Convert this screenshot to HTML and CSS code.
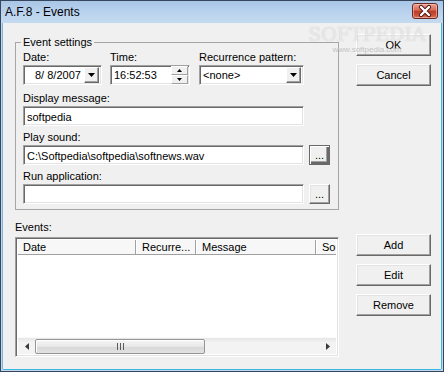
FILE: index.html
```html
<!DOCTYPE html>
<html lang="en">

<head>
    <meta charset="UTF-8">
    <meta name="viewport" content="width=device-width, initial-scale=1.0">
    <title>A.F.8 - Events</title>
    <link rel="stylesheet" href="styles.css">
</head>

<body>
    <div class="window">
        <div class="titlebar">
            <span class="title">A.F.8 - Events</span>
            <span class="close-btn">
                <svg width="26" height="16" viewBox="0 0 26 16">
                    <path d="M9 4 L17 12 M17 4 L9 12" stroke="#4a1410" stroke-width="4.2" stroke-linecap="round" />
                    <path d="M9 4 L17 12 M17 4 L9 12" stroke="#fff" stroke-width="2.4" stroke-linecap="round" />
                </svg>
            </span>
        </div>
        <div class="client">
            <div class="main">
                <fieldset class="group">
                    <legend>Event settings</legend>
                    <div class="row-top">
                        <div class="col-date">
                            <label>Date:</label>
                            <div class="sunken picker">
                                <span class="value date-value">8/ 8/2007</span>
                                <span class="drop-btn"><svg width="7" height="4" viewBox="0 0 7 4"><path d="M0 0 H7 L3.5 4 Z" fill="#000" /></svg></span>
                            </div>
                        </div>
                        <div class="col-time">
                            <label>Time:</label>
                            <div class="sunken picker">
                                <span class="value">16:52:53</span>
                                <span class="spin">
                                    <span class="spin-half"><svg width="5" height="3" viewBox="0 0 5 3"><path d="M0 3 H5 L2.5 0 Z" fill="#000" /></svg></span>
                                    <span class="spin-half"><svg width="5" height="3" viewBox="0 0 5 3"><path d="M0 0 H5 L2.5 3 Z" fill="#000" /></svg></span>
                                </span>
                            </div>
                        </div>
                        <div class="col-recur">
                            <label>Recurrence pattern:</label>
                            <div class="sunken picker">
                                <span class="value">&lt;none&gt;</span>
                                <span class="drop-btn"><svg width="7" height="4" viewBox="0 0 7 4"><path d="M0 0 H7 L3.5 4 Z" fill="#000" /></svg></span>
                            </div>
                        </div>
                    </div>

                    <label class="gap-big">Display message:</label>
                    <div class="sunken edit">softpedia</div>

                    <label class="gap">Play sound:</label>
                    <div class="path-row">
                        <div class="sunken edit">C:\Softpedia\softpedia\softnews.wav</div>
                        <span class="btn dots default">...</span>
                    </div>

                    <label class="gap">Run application:</label>
                    <div class="path-row">
                        <div class="sunken edit"></div>
                        <span class="btn dots">...</span>
                    </div>
                </fieldset>

                <div class="events-label">Events:</div>
                <div class="sunken listview">
                    <div class="lv-header">
                        <span class="lv-col col-1">Date</span>
                        <span class="lv-col col-2">Recurre...</span>
                        <span class="lv-col col-3">Message</span>
                        <span class="lv-col col-4">Sou</span>
                    </div>
                    <div class="lv-body"></div>
                    <div class="hscroll">
                        <span class="arrow"><svg width="4" height="7" viewBox="0 0 4 7"><path d="M4 0 V7 L0 3.5 Z" fill="#3a3a3a" /></svg></span>
                        <span class="track">
                            <span class="thumb"><span class="grip"></span></span>
                        </span>
                        <span class="arrow"><svg width="4" height="7" viewBox="0 0 4 7"><path d="M0 0 V7 L4 3.5 Z" fill="#3a3a3a" /></svg></span>
                    </div>
                </div>
            </div>

            <div class="side">
                <span class="btn big ok">OK</span>
                <span class="btn big cancel">Cancel</span>
                <span class="btn big add">Add</span>
                <span class="btn big edit-btn">Edit</span>
                <span class="btn big remove">Remove</span>
            </div>
        </div>

        <div class="watermark">
            <span class="wm-logo">SOFTPEDIA</span>
            <span class="wm-url">www.softpedia.com</span>
        </div>
    </div>
</body>

</html>
```

FILE: styles.css
```css
* {
    margin: 0;
    padding: 0;
    box-sizing: border-box;
}

body {
    font-family: "Liberation Sans", Arial, sans-serif;
    font-size: 11px;
    color: #000;
    background: #fff;
}

.window {
    position: relative;
    width: 444px;
    height: 372px;
    display: flex;
    flex-direction: column;
    background: #c2d7ee;
    border: 1px solid #34475e;
    overflow: hidden;
}

.titlebar {
    height: 22px;
    display: flex;
    align-items: center;
    justify-content: space-between;
    padding: 0 5px 0 4px;
    background: linear-gradient(#a9c6e6, #bcd4ee 60%, #c4daf0);
}

.title {
    font-size: 12px;
    color: #000;
}

.close-btn {
    display: block;
    width: 26px;
    height: 16px;
    margin-top: -3px;
    border: 1px solid #6b2a24;
    border-radius: 3px;
    background: linear-gradient(#eba393, #d46a55 45%, #bd3b26 50%, #c85238 80%, #d8735a);
    box-shadow: inset 0 0 0 1px rgba(255, 210, 200, 0.5);
    line-height: 0;
}

.close-btn svg {
    margin: -1px 0 0 -1px;
}

.client {
    flex: 1;
    display: flex;
    margin: 0 2px 2px 2px;
    padding: 13px 10px 0 12px;
    background: #f0f0f0;
    box-shadow: 0 1px 0 #3ab6e3, 1px 0 0 #3ab6e3, -1px 0 0 #7fb4de;
}

.main {
    width: 324px;
}

/* group box */
.group {
    width: 324px;
    border: 1px solid #a6a6a6;
    padding: 2px 7px 5px 7px;
}

.group legend {
    line-height: 12px;
    padding: 0 2px;
    margin-left: -2px;
}

label {
    display: block;
    height: 14px;
    line-height: 14px;
    margin-bottom: 1px;
}

.gap-big {
    margin-top: 6px;
}

.gap {
    margin-top: 4px;
}

.row-top {
    display: flex;
}

.col-date {
    width: 79px;
    margin-right: 8px;
}

.col-time {
    width: 80px;
    margin-right: 9px;
}

.col-recur {
    width: 105px;
}

.sunken {
    background: #fff;
    border: 1px solid;
    border-color: #a0a0a0 #fff #fff #a0a0a0;
    box-shadow: inset 1px 1px #696969, inset -1px -1px #e3e3e3;
}

.picker {
    height: 20px;
    display: flex;
    align-items: center;
    padding: 2px 2px 2px 3px;
}

.picker .value {
    flex: 1;
    line-height: 14px;
}

.date-value {
    padding-left: 8px;
}

.drop-btn {
    width: 15px;
    height: 16px;
    display: flex;
    align-items: center;
    justify-content: center;
    background: #f0f0f0;
    border: 1px solid;
    border-color: #fff #696969 #696969 #fff;
    box-shadow: inset -1px -1px #a0a0a0;
}

.spin {
    width: 17px;
    height: 18px;
    display: flex;
    flex-direction: column;
    margin-right: -1px;
}

.spin-half {
    flex: 1;
    display: flex;
    align-items: center;
    justify-content: center;
    background: #f0f0f0;
    border: 1px solid;
    border-color: #fff #a0a0a0 #a0a0a0 #fff;
}

.edit {
    width: 281px;
    height: 20px;
    padding: 2px 3px;
    line-height: 16px;
    white-space: nowrap;
    overflow: hidden;
}

.path-row {
    display: flex;
    align-items: flex-start;
}

/* buttons */
.btn {
    display: flex;
    align-items: center;
    justify-content: center;
    background: #f0f0f0;
    border: 1px solid;
    border-color: #fff #696969 #696969 #fff;
    box-shadow: inset -1px -1px #a0a0a0, inset 1px 1px #e3e3e3;
}

.dots {
    width: 21px;
    height: 20px;
    margin-left: 5px;
    line-height: 12px;
    align-items: flex-end;
    padding-bottom: 3px;
}

.dots.default {
    border-color: #696969;
    box-shadow: inset 1px 1px #fff, inset -2px -2px #696969, inset -3px -3px #a0a0a0;
}

/* events list */
.events-label {
    margin-top: 10px;
    margin-bottom: 3px;
    line-height: 14px;
}

.listview {
    height: 120px;
    display: flex;
    flex-direction: column;
    padding: 2px;
}

.lv-header {
    height: 15px;
    display: flex;
    overflow: hidden;
    white-space: nowrap;
    background: #f7f7f7;
    border-bottom: 1px solid #a0a0a0;
}

.lv-col {
    flex-shrink: 0;
    line-height: 14px;
    padding-left: 5px;
    border-right: 1px solid #a0a0a0;
    box-shadow: 1px 0 0 #fff;
}

.col-1 {
    width: 118px;
}

.col-2 {
    width: 60px;
    padding-left: 6px;
}

.col-3 {
    width: 120px;
    padding-left: 6px;
}

.col-4 {
    width: 40px;
    padding-left: 6px;
}

.lv-body {
    flex: 1;
    background: #fff;
}

.hscroll {
    height: 17px;
    display: flex;
    background: linear-gradient(#e6e6e6, #f3f3f3 30%, #f3f3f3);
    border-top: 1px solid #fafafa;
}

.arrow {
    width: 17px;
    display: flex;
    align-items: center;
    justify-content: center;
}

.track {
    flex: 1;
    display: flex;
    align-items: center;
}

.thumb {
    width: 170px;
    height: 15px;
    display: flex;
    align-items: center;
    justify-content: center;
    border: 1px solid #959595;
    border-radius: 2px;
    background: linear-gradient(#f6f6f6, #e7e7e7 50%, #d8d8d8 55%, #e2e2e2);
    box-shadow: inset 1px 1px #fff;
}

.grip {
    width: 7px;
    height: 7px;
    background: repeating-linear-gradient(90deg, #5c5c5c 0 1px, transparent 1px 3px);
}

/* right side buttons */
.side {
    width: 75px;
    margin-left: 17px;
    display: flex;
    flex-direction: column;
}

.big {
    height: 22px;
    width: 75px;
}

.ok {
    margin-top: -2px;
}

.cancel {
    margin-top: 8px;
}

.add {
    margin-top: 148px;
}

.edit-btn,
.remove {
    margin-top: 8px;
}

/* watermark */
.watermark {
    position: absolute;
    left: 306px;
    top: 22px;
    width: 120px;
    display: flex;
    flex-direction: column;
    align-items: center;
    pointer-events: none;
}

.wm-logo {
    font-family: "DejaVu Serif", serif;
    font-size: 19px;
    letter-spacing: 0;
    line-height: 22px;
    color: rgba(255, 255, 255, 0.6);
    text-shadow: 0 0 1px rgba(160, 160, 160, 0.6);
}

.wm-url {
    font-size: 8px;
    line-height: 9px;
    color: #c4c4c4;
}
```
